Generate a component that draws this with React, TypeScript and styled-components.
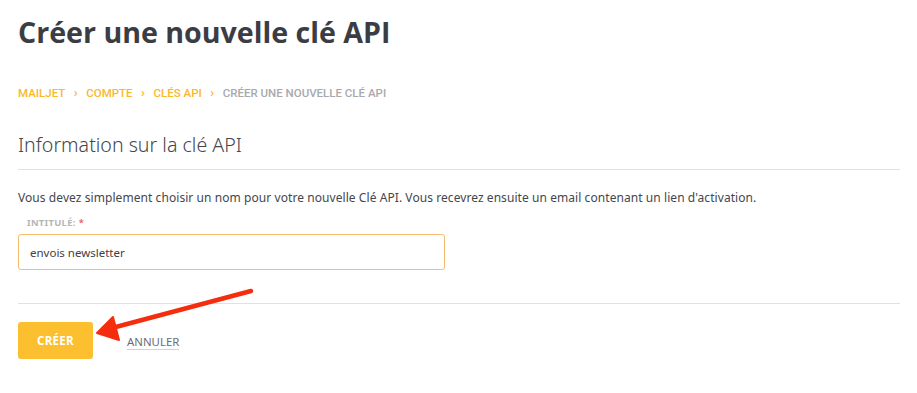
import React from "react";
import styled, { createGlobalStyle } from "styled-components";

const Global = createGlobalStyle`
  html, body { margin: 0; padding: 0; background: #ffffff; }
  body { font-family: "Open Sans", "Noto Sans", sans-serif; }
  * { box-sizing: border-box; }
`;

const Page = styled.div`
  position: relative;
  width: 917px;
  height: 393px;
  padding: 0 17px 0 18px;
  display: flex;
  flex-direction: column;
`;

const Title = styled.h1`
  margin: 12px 0 0;
  font-family: "Open Sans", sans-serif;
  font-weight: 700;
  font-size: 28.6px;
  line-height: 40px;
  color: #3c3d44;
`;

const Crumbs = styled.nav`
  margin-top: 34px;
  display: flex;
  align-items: center;
  gap: 8.5px;
  font-family: Roboto, sans-serif;
  font-weight: 500;
  font-size: 11.5px;
  line-height: 14px;
`;

const Crumb = styled.span<{ $current?: boolean }>`
  color: ${(p) => (p.$current ? "#a9a9ad" : "#f9b92a")};
`;

const Chevron = styled.span`
  color: #f9b92a;
  font-size: 13px;
  font-weight: 700;
  line-height: 14px;
`;

const SectionTitle = styled.h2`
  margin: 33px 0 0;
  font-family: "Noto Sans", sans-serif;
  font-weight: 300;
  font-size: 19.6px;
  line-height: 24px;
  color: #45464c;
`;

const Rule = styled.hr<{ $top: number }>`
  margin: ${(p) => p.$top}px 0 0;
  border: 0;
  border-top: 1px solid #e1e1e3;
  height: 0;
`;

const Paragraph = styled.p`
  margin: 20px 0 0;
  font-family: "Noto Sans", sans-serif;
  font-size: 12px;
  letter-spacing: 0.068px;
  line-height: 16px;
  color: #45464c;
`;

const Label = styled.label`
  margin: 11px 0 0 9px;
  font-family: "Noto Sans", sans-serif;
  font-weight: 700;
  font-size: 9.4px;
  line-height: 12px;
  color: #b5b5b8;
  letter-spacing: 0.3px;
`;

const Required = styled.span`
  color: #e9675c;
  margin-left: 3px;
`;

const Input = styled.input`
  margin-top: 5px;
  width: 427px;
  height: 36px;
  border: 1px solid #f5bd6b;
  border-radius: 3px;
  padding: 0 11px;
  font-family: "Noto Sans", sans-serif;
  font-size: 11.5px;
  color: #3f4046;
  outline: none;
  background: #fff;
`;

const Actions = styled.div`
  margin-top: 18px;
  display: flex;
  align-items: center;
  gap: 34px;
`;

const PrimaryButton = styled.button`
  width: 75px;
  height: 37px;
  border: 0;
  border-radius: 3px;
  background: #fbbf30;
  color: #ffffff;
  font-family: "Open Sans", sans-serif;
  font-weight: 700;
  font-size: 11.5px;
  letter-spacing: 0.3px;
`;

const TextLink = styled.a`
  margin-top: 4px;
  font-family: "Noto Sans", sans-serif;
  font-size: 11.4px;
  color: #6b6c72;
  text-decoration: none;
  border-bottom: 1px solid #d4d4d7;
  padding-bottom: 1px;
  line-height: 13px;
`;

const Annotation = styled.svg`
  position: absolute;
  left: 0;
  top: 0;
  pointer-events: none;
`;

export default function App() {
  return (
    <>
      <Global />
      <Page>
        <Title>Créer une nouvelle clé API</Title>
        <Crumbs>
          <Crumb>MAILJET</Crumb>
          <Chevron>›</Chevron>
          <Crumb>COMPTE</Crumb>
          <Chevron>›</Chevron>
          <Crumb>CLÉS API</Crumb>
          <Chevron>›</Chevron>
          <Crumb $current>CRÉER UNE NOUVELLE CLÉ API</Crumb>
        </Crumbs>
        <SectionTitle>Information sur la clé API</SectionTitle>
        <Rule $top={12} />
        <Paragraph>
          Vous devez simplement choisir un nom pour votre nouvelle Clé API. Vous recevrez ensuite un email contenant un lien d'activation.
        </Paragraph>
        <Label>
          INTITULÉ:<Required>*</Required>
        </Label>
        <Input defaultValue="envois newsletter" />
        <Rule $top={33} />
        <Actions>
          <PrimaryButton>CRÉER</PrimaryButton>
          <TextLink>ANNULER</TextLink>
        </Actions>
        <Annotation width="917" height="393" viewBox="0 0 917 393">
          <line x1="251" y1="291" x2="112" y2="328" stroke="#f52d0f" strokeWidth="4.5" strokeLinecap="round" />
          <polygon points="97,333 113,317 119,340" fill="#f52d0f" stroke="#f52d0f" strokeWidth="2" strokeLinejoin="round" />
        </Annotation>
      </Page>
    </>
  );
}
